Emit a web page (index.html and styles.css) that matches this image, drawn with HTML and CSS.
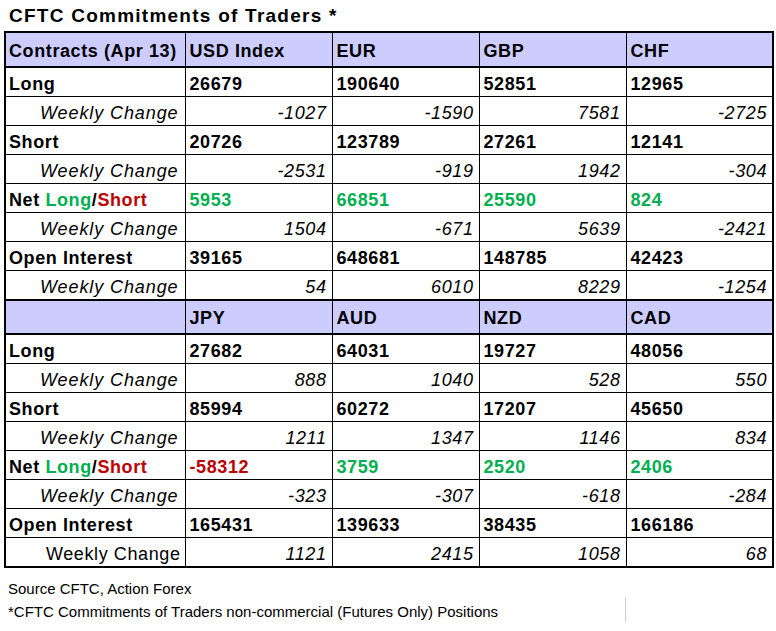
FILE: index.html
```html
<!DOCTYPE html>
<html>
<head>
<meta charset="utf-8">
<link rel="stylesheet" href="styles.css">
</head>
<body>
<div class="page">
  <h1 class="title">CFTC Commitments of Traders *</h1>
  <table class="cot">
    <colgroup>
      <col class="c-label"><col class="c-val"><col class="c-val"><col class="c-val"><col class="c-val">
    </colgroup>
    <tbody>
      <tr class="head">
        <td>Contracts (Apr 13)</td><td>USD Index</td><td>EUR</td><td>GBP</td><td>CHF</td>
      </tr>
      <tr class="main"><td>Long</td><td>26679</td><td>190640</td><td>52851</td><td>12965</td></tr>
      <tr class="chg"><td>Weekly Change</td><td>-1027</td><td>-1590</td><td>7581</td><td>-2725</td></tr>
      <tr class="main"><td>Short</td><td>20726</td><td>123789</td><td>27261</td><td>12141</td></tr>
      <tr class="chg"><td>Weekly Change</td><td>-2531</td><td>-919</td><td>1942</td><td>-304</td></tr>
      <tr class="main"><td>Net <span class="pos">Long</span>/<span class="neg">Short</span></td><td class="pos">5953</td><td class="pos">66851</td><td class="pos">25590</td><td class="pos">824</td></tr>
      <tr class="chg"><td>Weekly Change</td><td>1504</td><td>-671</td><td>5639</td><td>-2421</td></tr>
      <tr class="main"><td>Open Interest</td><td>39165</td><td>648681</td><td>148785</td><td>42423</td></tr>
      <tr class="chg"><td>Weekly Change</td><td>54</td><td>6010</td><td>8229</td><td>-1254</td></tr>
      <tr class="head head2">
        <td></td><td>JPY</td><td>AUD</td><td>NZD</td><td>CAD</td>
      </tr>
      <tr class="main"><td>Long</td><td>27682</td><td>64031</td><td>19727</td><td>48056</td></tr>
      <tr class="chg"><td>Weekly Change</td><td>888</td><td>1040</td><td>528</td><td>550</td></tr>
      <tr class="main"><td>Short</td><td>85994</td><td>60272</td><td>17207</td><td>45650</td></tr>
      <tr class="chg"><td>Weekly Change</td><td>1211</td><td>1347</td><td>1146</td><td>834</td></tr>
      <tr class="main"><td>Net <span class="pos">Long</span>/<span class="neg">Short</span></td><td class="neg">-58312</td><td class="pos">3759</td><td class="pos">2520</td><td class="pos">2406</td></tr>
      <tr class="chg"><td>Weekly Change</td><td>-323</td><td>-307</td><td>-618</td><td>-284</td></tr>
      <tr class="main"><td>Open Interest</td><td>165431</td><td>139633</td><td>38435</td><td>166186</td></tr>
      <tr class="chg last"><td>Weekly Change</td><td>1121</td><td>2415</td><td>1058</td><td>68</td></tr>
    </tbody>
  </table>
  <div class="notes">
    <p class="note">Source CFTC, Action Forex</p>
    <p class="note">*CFTC Commitments of Traders non-commercial (Futures Only) Positions</p>
    <span class="artifact"></span>
  </div>
</div>
</body>
</html>
```

FILE: styles.css
```css
html, body {
  margin: 0;
  padding: 0;
  background: #ffffff;
}

.page {
  width: 776px;
  padding-left: 4px;
  box-sizing: border-box;
  font-family: "Liberation Sans", Arial, sans-serif;
  color: #000;
}

.title {
  margin: 0;
  padding: 5px 0 4px 5px;
  font-size: 19px;
  line-height: 22px;
  font-weight: bold;
  letter-spacing: 1.25px;
}

.cot {
  border-collapse: collapse;
  table-layout: fixed;
  width: 769px;
  border: 2px solid #000;
  font-size: 18px;
  letter-spacing: 0.6px;
}

.c-label { width: 180px; }
.c-val { width: 147px; }

.cot td {
  border: 1px solid #000;
  padding: 4px 5px 0 4px;
  height: 24px;
  white-space: nowrap;
  overflow: hidden;
  vertical-align: middle;
  line-height: 20px;
}

.cot td:first-child {
  padding-left: 3px;
}

.head td {
  background: #ccccff;
  font-weight: bold;
  border-top: 2px solid #000;
  border-bottom: 2px solid #000;
  padding-top: 2px;
  height: 31px;
}

.head2 td {
  height: 30px;
}

.main td {
  font-weight: bold;
  text-align: left;
}

.chg td {
  font-style: italic;
  text-align: right;
}

.chg td:first-child {
  letter-spacing: 0.9px;
  padding-right: 6px;
}

.last td:first-child {
  font-style: normal;
  letter-spacing: 0.6px;
  padding-right: 4px;
}

.pos { color: #00b050; }
.neg { color: #c00000; }

.notes {
  position: relative;
  padding-top: 9px;
  font-size: 15px;
  letter-spacing: 0;
}

.note {
  margin: 0;
  padding-left: 4px;
  line-height: 23px;
}

.artifact {
  position: absolute;
  left: 621px;
  top: 29px;
  width: 1px;
  height: 25px;
  background: #c9cfdb;
}
```
